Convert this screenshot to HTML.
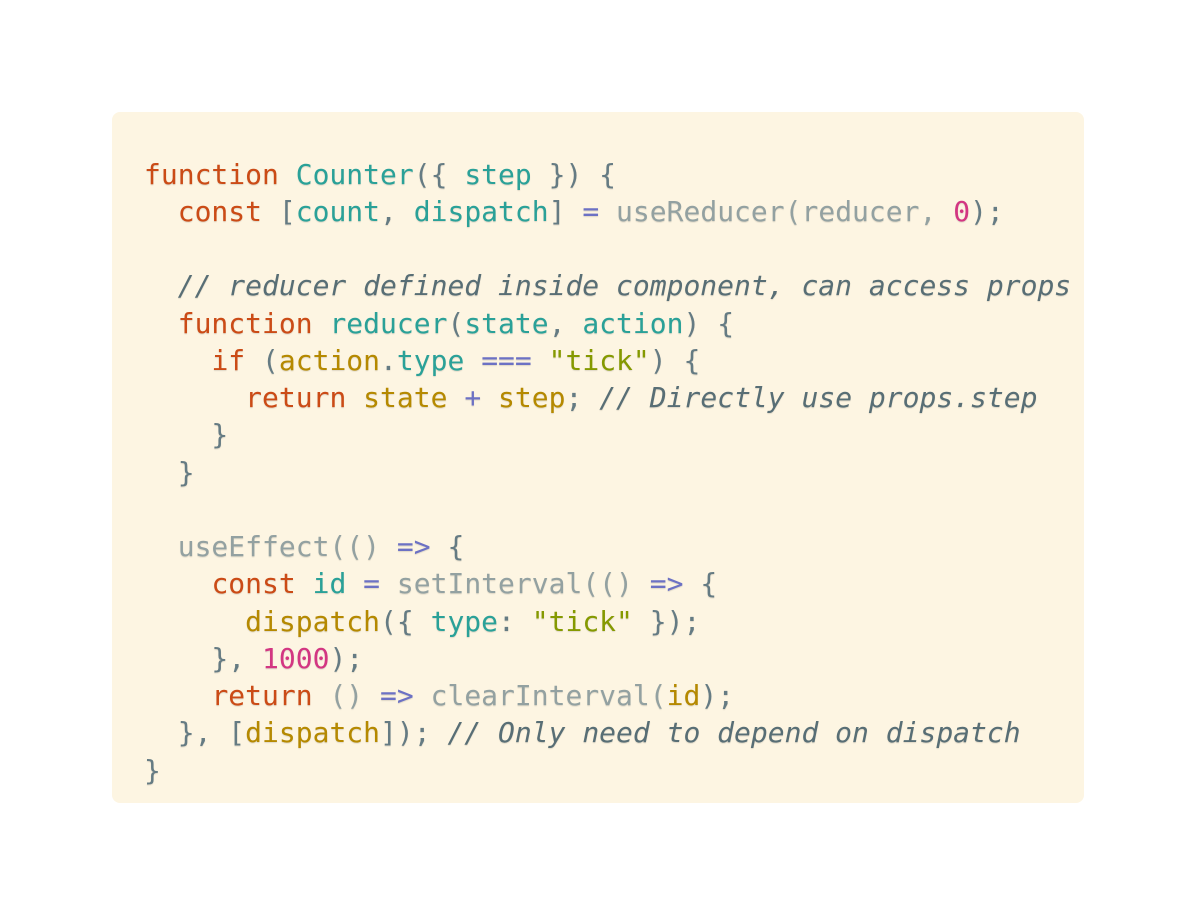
<!DOCTYPE html>
<html><head><style>
html,body{margin:0;padding:0;background:#fff;width:1196px;height:916px;overflow:hidden}
.box{position:absolute;left:112px;top:112px;width:972px;height:691px;background:#fdf5e2;border-radius:8px}
pre{margin:0;position:absolute;left:144px;top:155.5px;font-family:"DejaVu Sans Mono","Liberation Mono",monospace;font-size:28px;line-height:37.27px;color:#657b83;text-shadow:0 1px 1px rgba(0,0,0,0.12)}
.k{color:#cb4b16}.f{color:#2aa198}.p{color:#657b83}.o{color:#6c71c4}.g{color:#93a1a1}.n{color:#d33682}.y{color:#b58900}.s{color:#859900}.c{color:#586e75;font-style:italic}
</style></head><body>
<div class="box"></div>
<pre><span class="k">function</span> <span class="f">Counter</span>({ <span class="f">step</span> }) {
  <span class="k">const</span> [<span class="f">count</span>, <span class="f">dispatch</span>] <span class="o">=</span> <span class="g">useReducer(reducer,</span> <span class="n">0</span>);

  <span class="c">// reducer defined inside component, can access props</span>
  <span class="k">function</span> <span class="f">reducer</span>(<span class="f">state</span>, <span class="f">action</span>) {
    <span class="k">if</span> (<span class="y">action</span>.<span class="f">type</span> <span class="o">===</span> <span class="s">"tick"</span>) {
      <span class="k">return</span> <span class="y">state</span> <span class="o">+</span> <span class="y">step</span>; <span class="c">// Directly use props.step</span>
    }
  }

  <span class="g">useEffect(()</span> <span class="o">=&gt;</span> {
    <span class="k">const</span> <span class="f">id</span> <span class="o">=</span> <span class="g">setInterval(()</span> <span class="o">=&gt;</span> {
      <span class="y">dispatch</span>({ <span class="f">type</span>: <span class="s">"tick"</span> });
    }, <span class="n">1000</span>);
    <span class="k">return</span> <span class="g">()</span> <span class="o">=&gt;</span> <span class="g">clearInterval(</span><span class="y">id</span>);
  }, [<span class="y">dispatch</span>]); <span class="c">// Only need to depend on dispatch</span>
}</pre>
</body></html>
